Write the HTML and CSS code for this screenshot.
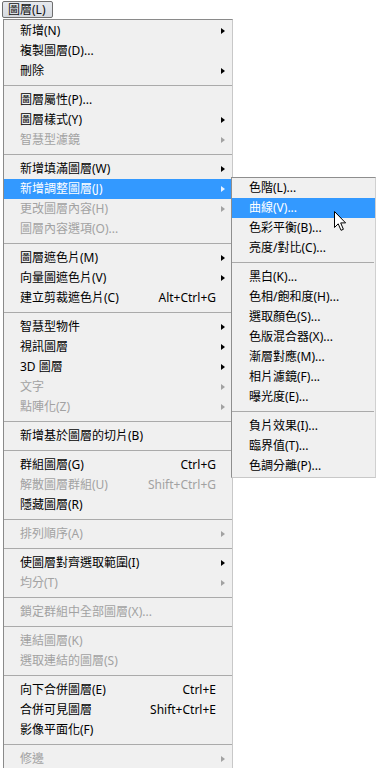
FILE: index.html
```html
<!DOCTYPE html>
<html lang="zh-Hant">
<head>
<meta charset="utf-8">
<title>圖層選單</title>
<link rel="stylesheet" href="styles.css">
</head>
<body>
<div class="screen">
  <div class="menubar"><span class="menu-title">圖層(L)</span></div>
  <div class="menu">
    <div class="item"><span class="label">新增(N)</span><span class="key"></span><span class="arrow"></span></div>
    <div class="item"><span class="label">複製圖層(D)...</span><span class="key"></span><span class="noarrow"></span></div>
    <div class="item"><span class="label">刪除</span><span class="key"></span><span class="arrow"></span></div>
    <div class="sep"></div>
    <div class="item"><span class="label">圖層屬性(P)...</span><span class="key"></span><span class="noarrow"></span></div>
    <div class="item"><span class="label">圖層樣式(Y)</span><span class="key"></span><span class="arrow"></span></div>
    <div class="item disabled"><span class="label">智慧型濾鏡</span><span class="key"></span><span class="arrow"></span></div>
    <div class="sep"></div>
    <div class="item"><span class="label">新增填滿圖層(W)</span><span class="key"></span><span class="arrow"></span></div>
    <div class="item active"><span class="label">新增調整圖層(J)</span><span class="key"></span><span class="arrow"></span></div>
    <div class="item disabled"><span class="label">更改圖層內容(H)</span><span class="key"></span><span class="arrow"></span></div>
    <div class="item disabled"><span class="label">圖層內容選項(O)...</span><span class="key"></span><span class="noarrow"></span></div>
    <div class="sep"></div>
    <div class="item"><span class="label">圖層遮色片(M)</span><span class="key"></span><span class="arrow"></span></div>
    <div class="item"><span class="label">向量圖遮色片(V)</span><span class="key"></span><span class="arrow"></span></div>
    <div class="item"><span class="label">建立剪裁遮色片(C)</span><span class="key">Alt+Ctrl+G</span><span class="noarrow"></span></div>
    <div class="sep"></div>
    <div class="item"><span class="label">智慧型物件</span><span class="key"></span><span class="arrow"></span></div>
    <div class="item"><span class="label">視訊圖層</span><span class="key"></span><span class="arrow"></span></div>
    <div class="item"><span class="label">3D 圖層</span><span class="key"></span><span class="arrow"></span></div>
    <div class="item disabled"><span class="label">文字</span><span class="key"></span><span class="arrow"></span></div>
    <div class="item disabled"><span class="label">點陣化(Z)</span><span class="key"></span><span class="arrow"></span></div>
    <div class="sep"></div>
    <div class="item"><span class="label">新增基於圖層的切片(B)</span><span class="key"></span><span class="noarrow"></span></div>
    <div class="sep"></div>
    <div class="item"><span class="label">群組圖層(G)</span><span class="key">Ctrl+G</span><span class="noarrow"></span></div>
    <div class="item disabled"><span class="label">解散圖層群組(U)</span><span class="key">Shift+Ctrl+G</span><span class="noarrow"></span></div>
    <div class="item"><span class="label">隱藏圖層(R)</span><span class="key"></span><span class="noarrow"></span></div>
    <div class="sep"></div>
    <div class="item disabled"><span class="label">排列順序(A)</span><span class="key"></span><span class="arrow"></span></div>
    <div class="sep"></div>
    <div class="item"><span class="label">使圖層對齊選取範圍(I)</span><span class="key"></span><span class="arrow"></span></div>
    <div class="item disabled"><span class="label">均分(T)</span><span class="key"></span><span class="arrow"></span></div>
    <div class="sep"></div>
    <div class="item disabled"><span class="label">鎖定群組中全部圖層(X)...</span><span class="key"></span><span class="noarrow"></span></div>
    <div class="sep"></div>
    <div class="item disabled"><span class="label">連結圖層(K)</span><span class="key"></span><span class="noarrow"></span></div>
    <div class="item disabled"><span class="label">選取連結的圖層(S)</span><span class="key"></span><span class="noarrow"></span></div>
    <div class="sep"></div>
    <div class="item"><span class="label">向下合併圖層(E)</span><span class="key">Ctrl+E</span><span class="noarrow"></span></div>
    <div class="item"><span class="label">合併可見圖層</span><span class="key">Shift+Ctrl+E</span><span class="noarrow"></span></div>
    <div class="item"><span class="label">影像平面化(F)</span><span class="key"></span><span class="noarrow"></span></div>
    <div class="sep"></div>
    <div class="item disabled"><span class="label">修邊</span><span class="key"></span><span class="arrow"></span></div>
  </div>

  <div class="submenu">
    <div class="sitem">色階(L)...</div>
    <div class="sitem active">曲線(V)...</div>
    <div class="sitem">色彩平衡(B)...</div>
    <div class="sitem">亮度/對比(C)...</div>
    <div class="sep"></div>
    <div class="sitem">黑白(K)...</div>
    <div class="sitem">色相/飽和度(H)...</div>
    <div class="sitem">選取顏色(S)...</div>
    <div class="sitem">色版混合器(X)...</div>
    <div class="sitem">漸層對應(M)...</div>
    <div class="sitem">相片濾鏡(F)...</div>
    <div class="sitem">曝光度(E)...</div>
    <div class="sep"></div>
    <div class="sitem">負片效果(I)...</div>
    <div class="sitem">臨界值(T)...</div>
    <div class="sitem">色調分離(P)...</div>
  </div>

  <svg class="cursor" width="14" height="22" viewBox="0 0 14 22">
    <path d="M1.5 1.5 L1.5 17.5 L5.2 13.8 L8 20.3 L10.4 19.3 L7.7 12.9 L12.6 12.9 Z" fill="#ffffff" stroke="#000000" stroke-width="1" stroke-linejoin="miter"/>
  </svg>
</div>
</body>
</html>
```

FILE: styles.css
```css
html, body {
  margin: 0;
  padding: 0;
  background: #ffffff;
}

.screen {
  position: relative;
  width: 377px;
  height: 768px;
  overflow: hidden;
  font-family: "Noto Sans", "Noto Sans CJK TC", sans-serif;
  font-size: 12px;
  color: #000000;
}

.menubar {
  height: 19px;
  padding: 1px 0 0 2px;
  box-sizing: border-box;
}

.menu-title {
  display: inline-block;
  height: 17px;
  line-height: 16px;
  padding: 0 6px 0 5px;
  box-sizing: border-box;
  border: 1px solid #6f6f6f;
  border-radius: 2px;
  background: linear-gradient(#e6e9ee, #d6dae0);
  color: #111;
}

.menu {
  margin-left: 3px;
  width: 230px;
  box-sizing: border-box;
  border: 1px solid #8a8a8a;
  border-right-color: #c8c8c8;
  background: #f0f0f0;
  padding: 1px 0 1px 0;
}

.item {
  display: grid;
  grid-template-columns: 1fr auto 9px;
  align-items: center;
  height: 20px;
  line-height: 20px;
  padding: 0 7px 0 16px;
  white-space: nowrap;
}

.item .key {
  text-align: right;
}

.arrow {
  justify-self: end;
  width: 0;
  height: 0;
  border-left: 4px solid #000;
  border-top: 3.5px solid transparent;
  border-bottom: 3.5px solid transparent;
}

.disabled {
  color: #a2a2a2;
}

.disabled .arrow {
  border-left-color: #a2a2a2;
}

.active {
  background: #3399ff;
  color: #ffffff;
}

.active .arrow {
  border-left-color: #e8f2ff;
}

.sep {
  height: 1px;
  background: #aaaaaa;
  margin: 4px 0 4px 0;
}

.submenu {
  position: absolute;
  left: 231px;
  top: 177px;
  width: 145px;
  box-sizing: border-box;
  border: 1px solid #8e8e8e;
  border-right-color: #d0d0d0;
  border-bottom-color: #c8c8c8;
  background: #f0f0f0;
  padding: 0 0 1px 0;
}

.sitem {
  height: 20px;
  line-height: 20px;
  padding-left: 17px;
  white-space: nowrap;
}

.submenu .sep {
  margin: 4px 1px 4px 0;
}

.cursor {
  position: absolute;
  left: 333px;
  top: 210px;
}
```
